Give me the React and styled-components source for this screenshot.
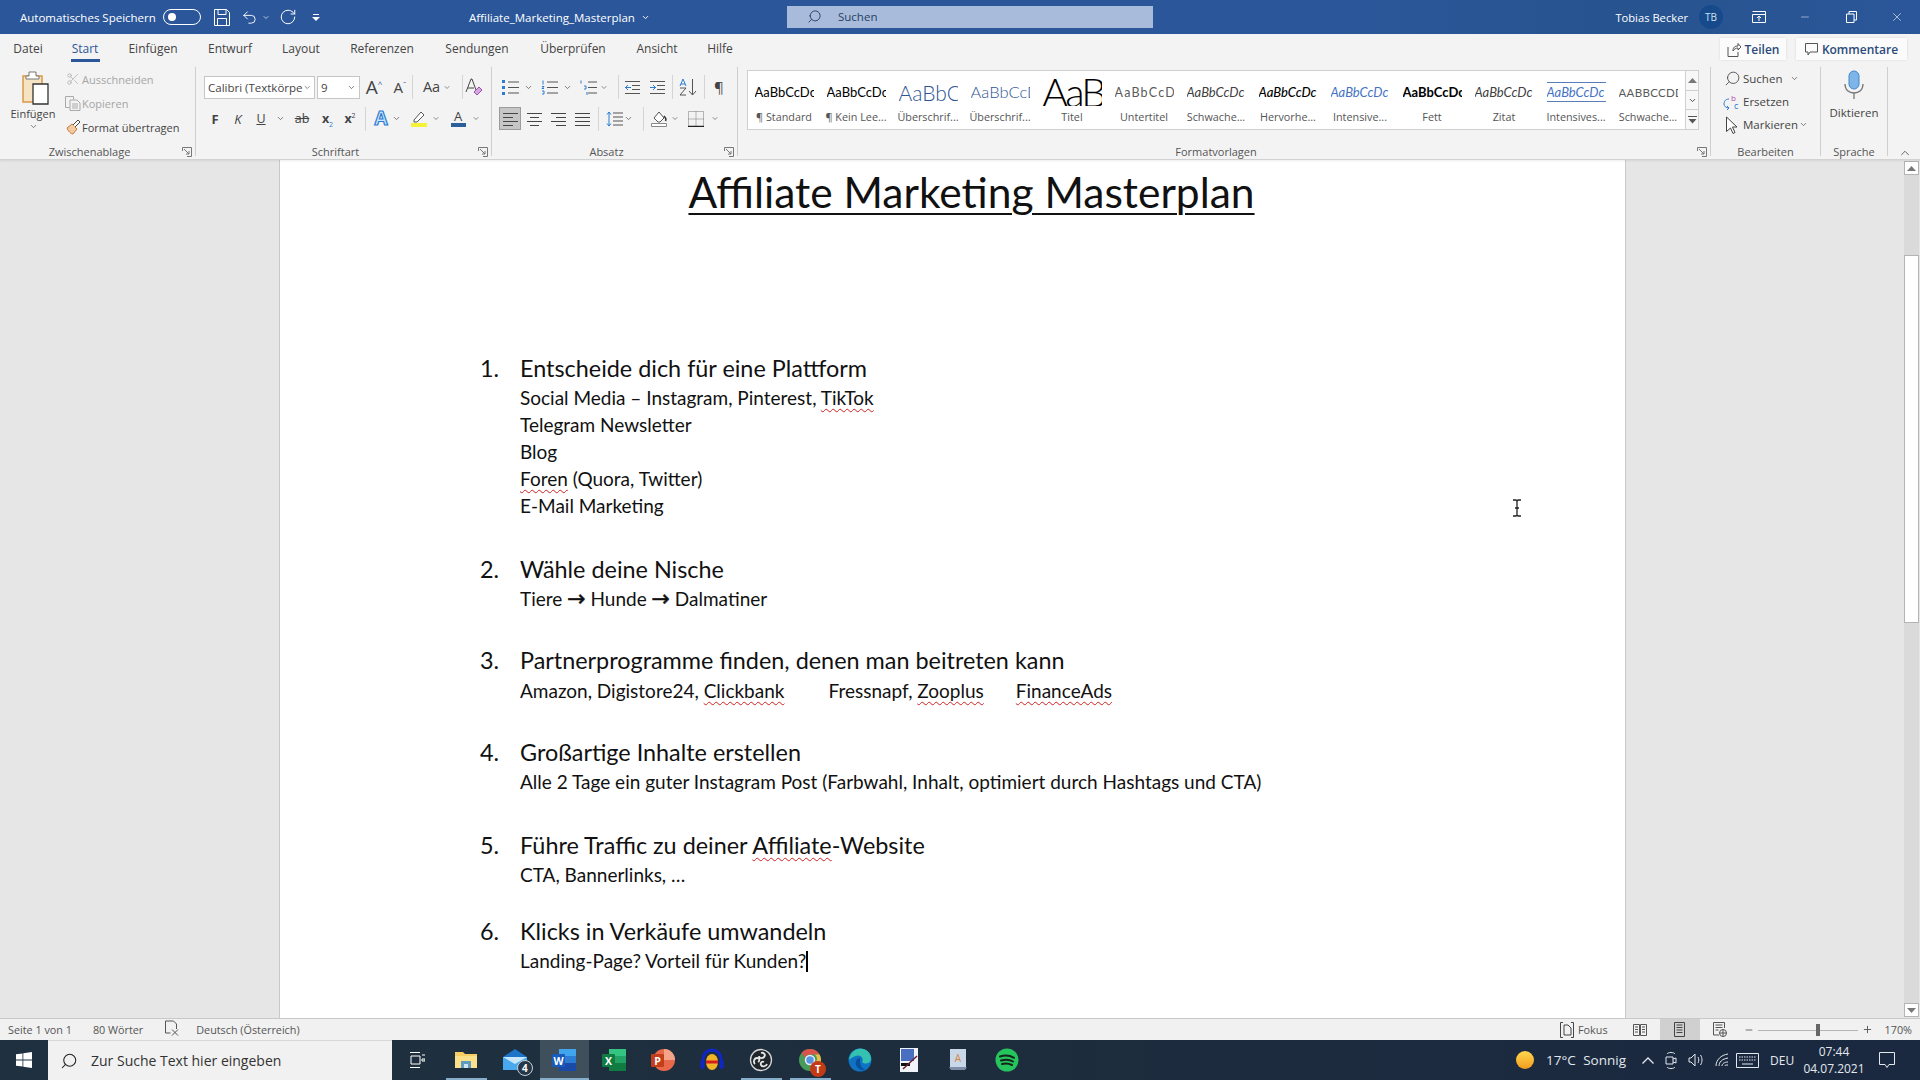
import React from "react";
import styled, { createGlobalStyle } from "styled-components";
import { Undo2, RotateCw, ChevronDown, ChevronUp, Search, Scissors, Minus, Plus, X } from "lucide-react";

const GlobalStyle = createGlobalStyle`
  html, body { margin: 0; padding: 0; width: 1920px; height: 1080px; overflow: hidden; }
  body { font-family: "Open Sans", "Liberation Sans", sans-serif; color: #262626; background: #e6e6e6; }
  * { box-sizing: border-box; }
`;

const tabs = [
  ["Datei", 56], ["Start", 58], ["Einfügen", 78], ["Entwurf", 76], ["Layout", 66],
  ["Referenzen", 96], ["Sendungen", 94], ["Überprüfen", 98], ["Ansicht", 70], ["Hilfe", 56],
];

const galleryItems = [
  { text: "AaBbCcDc", label: "¶ Standard", kind: "normal" },
  { text: "AaBbCcDc", label: "¶ Kein Lee...", kind: "normal" },
  { text: "AaBbCc", label: "Überschrif...", kind: "h1" },
  { text: "AaBbCcD", label: "Überschrif...", kind: "h2" },
  { text: "AaB", label: "Titel", kind: "title" },
  { text: "AaBbCcD", label: "Untertitel", kind: "sub" },
  { text: "AaBbCcDc", label: "Schwache...", kind: "subtle" },
  { text: "AaBbCcDc", label: "Hervorhe...", kind: "emph" },
  { text: "AaBbCcDc", label: "Intensive...", kind: "intense" },
  { text: "AaBbCcDc", label: "Fett", kind: "bold" },
  { text: "AaBbCcDc", label: "Zitat", kind: "subtle" },
  { text: "AaBbCcDc", label: "Intensives...", kind: "quote" },
  { text: "AABBCCDD", label: "Schwache...", kind: "ref" },
];

const previewStyles = {
  normal: "font-size: 13px; color: #000;",
  h1: "font-size: 21px; color: #2f5496; font-weight: 300;",
  h2: "font-size: 16.5px; color: #2f5496; font-weight: 300;",
  title: "font-size: 40px; color: #000; font-weight: 300; line-height: 28px; letter-spacing: -3px;",
  sub: "font-size: 12.5px; color: #5a5a5a; letter-spacing: 1.2px;",
  subtle: "font-size: 13px; color: #404040; font-style: italic;",
  emph: "font-size: 13px; color: #000; font-style: italic; font-weight: 500;",
  intense: "font-size: 13px; color: #4472c4; font-style: italic;",
  bold: "font-size: 13px; color: #000; font-weight: 700;",
  quote: "font-size: 13px; color: #4472c4; font-style: italic; border-top: 1px solid #5b7db5; border-bottom: 1px solid #5b7db5; line-height: 18px;",
  ref: "font-size: 11.5px; color: #5a5a5a; letter-spacing: 0.3px;",
};

const Screen = styled.div`
  width: 1920px;
  height: 1080px;
  display: flex;
  flex-direction: column;
  overflow: hidden;
`;

/* title bar */
const TitleBar = styled.div`
  height: 34px;
  flex: none;
  background: linear-gradient(90deg, #2b579a 0%, #2b579a 70%, #27538f 85%, #2b579a 100%);
  color: #fff;
  display: grid;
  grid-template-columns: 469px 318px 366px 1fr;
  align-items: center;
  font-size: 11.5px;
`;
const QuickAccess = styled.div`
  display: flex;
  align-items: center;
  padding-left: 20px;
`;
const Toggle = styled.div`
  width: 38px;
  height: 16px;
  border: 1.5px solid #fff;
  border-radius: 8px;
  margin-left: 7px;
  padding: 2.5px 4px;
  &::before {
    content: "";
    display: block;
    width: 8px;
    height: 8px;
    border-radius: 50%;
    background: #fff;
  }
`;
const QuickSlot = styled.div`
  width: ${(p) => p.$w}px;
  margin-left: ${(p) => p.$ml || 0}px;
  display: flex;
  justify-content: center;
  align-items: center;
`;
const DocName = styled.div`
  display: flex;
  align-items: center;
  gap: 6px;
`;
const SearchBox = styled.div`
  height: 22px;
  margin-top: -1px;
  background: #a8bbda;
  color: #253f66;
  display: flex;
  align-items: center;
  gap: 16px;
  padding-left: 20px;
`;
const WindowArea = styled.div`
  display: flex;
  justify-content: flex-end;
  align-items: center;
`;
const UserName = styled.span`
  font-size: 11.2px;
`;
const Avatar = styled.div`
  width: 24px;
  height: 24px;
  border-radius: 50%;
  background: #164a8a;
  color: #cfe0f5;
  font-size: 10px;
  display: grid;
  place-items: center;
  margin: 0 13px 0 11px;
`;
const WinButton = styled.div`
  width: 46px;
  height: 34px;
  display: grid;
  place-items: center;
`;

/* tab row */
const TabRow = styled.div`
  height: 32px;
  flex: none;
  background: #f3f3f3;
  display: flex;
  align-items: center;
  font-size: 12px;
  padding-right: 13px;
`;
const Tab = styled.div`
  width: ${(p) => p.$w}px;
  height: 32px;
  line-height: 30px;
  text-align: center;
  position: relative;
  color: ${(p) => (p.$active ? "#2b579a" : "#444")};
  &::after {
    content: "";
    display: ${(p) => (p.$active ? "block" : "none")};
    position: absolute;
    left: 15px;
    right: 14px;
    top: 25px;
    height: 3px;
    background: #2b579a;
  }
`;
const TabActions = styled.div`
  margin-left: auto;
  margin-top: -2px;
  display: flex;
  gap: 10px;
`;
const ActionButton = styled.div`
  width: ${(p) => p.$w}px;
  height: 22px;
  background: #fbfbfb;
  box-shadow: 0 0 2px rgba(0, 0, 0, 0.12);
  color: #2b4a7a;
  font-weight: 600;
  font-size: 12px;
  display: flex;
  align-items: center;
  justify-content: center;
  gap: 4px;
`;

/* ribbon */
const Ribbon = styled.div`
  height: 94px;
  flex: none;
  background: #f3f3f3;
  border-bottom: 1px solid #d2d2d2;
  box-shadow: 0 1px 2px rgba(0, 0, 0, 0.08);
  display: flex;
  align-items: flex-start;
  font-size: 11px;
  color: #444;
  position: relative;
  z-index: 2;
`;
const Group = styled.div`
  width: ${(p) => p.$w}px;
  height: 89px;
  margin-top: 1px;
  border-right: 1px solid #cfcfcf;
  display: flex;
  flex-direction: column;
  position: relative;
`;
const GroupBody = styled.div`
  flex: 1;
  min-height: 0;
  display: flex;
  padding-left: ${(p) => p.$pl || 0}px;
`;
const GroupLabel = styled.div`
  height: 14px;
  line-height: 14px;
  margin-bottom: -3px;
  padding-right: ${(p) => (p.$launcher ? 16 : 0)}px;
  text-align: center;
  font-size: 11px;
  color: #555;
`;
const Launcher = styled.div`
  position: absolute;
  right: 3px;
  bottom: -1px;
  width: 10px;
  height: 10px;
  line-height: 0;
`;
const PasteColumn = styled.div`
  width: 56px;
  margin-left: 5px;
  padding-top: 3px;
  display: flex;
  flex-direction: column;
  align-items: center;
`;
const PasteLabel = styled.div`
  margin-top: 1px;
  line-height: 16px;
`;
const ClipList = styled.div`
  margin-left: 2px;
`;
const ClipRow = styled.div`
  height: 24px;
  display: flex;
  align-items: center;
  color: ${(p) => (p.$off ? "#a6a6a6" : "#444")};
`;
const ClipIcon = styled.div`
  width: 19px;
  display: flex;
  justify-content: center;
`;
const ToolStack = styled.div`
  padding-top: 8px;
  display: flex;
  flex-direction: column;
  gap: 8px;
`;
const ToolRow = styled.div`
  height: ${(p) => p.$h || 24}px;
  display: flex;
  align-items: center;
`;
const FontSelect = styled.div`
  width: ${(p) => p.$w}px;
  margin-left: ${(p) => p.$ml || 0}px;
  height: 23px;
  background: #fff;
  border: 1px solid #c6c6c6;
  display: flex;
  align-items: center;
  justify-content: space-between;
  padding: 0 3px;
  font-size: 11.5px;
  white-space: nowrap;
  overflow: hidden;
`;
const Slot = styled.div`
  width: ${(p) => p.$w}px;
  margin-left: ${(p) => p.$ml || 0}px;
  height: 22px;
  display: flex;
  align-items: center;
  justify-content: center;
  flex: none;
`;
const SelectedSlot = styled(Slot)`
  height: 23px;
  background: #c6c6c6;
  border: 1px solid #9c9c9c;
`;
const ToolSep = styled.div`
  width: 1px;
  height: 24px;
  flex: none;
  background: #d4d4d4;
  margin-left: ${(p) => p.$ml || 0}px;
`;
const BigA = styled.span`
  font-size: ${(p) => p.$size}px;
  line-height: 1;
  color: #444;
  font-family: "Open Sans", sans-serif;
`;
const Caret = styled.span`
  font-size: 8px;
  line-height: 1;
  color: #2b579a;
  align-self: flex-start;
  margin-top: 4px;
`;
const FormatF = styled.span`
  font-size: 13px;
  font-weight: 700;
  color: #444;
`;
const FormatK = styled.span`
  font-size: 13px;
  font-style: italic;
  color: #444;
`;
const FormatU = styled.span`
  font-size: 12.5px;
  text-decoration: underline;
  color: #444;
`;
const FormatS = styled.span`
  font-size: 12.5px;
  text-decoration: line-through;
  color: #444;
`;
const FormatX = styled.span`
  font-size: 12.5px;
  font-weight: 700;
  color: #444;
  sub, sup { font-size: 7px; font-weight: 400; color: #2b7cd3; line-height: 0; }
  sup { color: #444; }
`;
const EffectA = styled.span`
  font-size: 19px;
  font-weight: 700;
  line-height: 1;
  color: #cfe6fb;
  -webkit-text-stroke: 1.2px #2b7cd3;
`;
const ColorA = styled.div`
  display: flex;
  flex-direction: column;
  align-items: center;
  font-size: 13px;
  line-height: 12px;
  color: #444;
  &::after {
    content: "";
    width: 15px;
    height: 4px;
    margin-top: 1px;
    background: #2a6099;
  }
`;
const Gallery = styled.div`
  margin-left: 9px;
  margin-top: 3px;
  width: 952px;
  height: 60px;
  background: #fff;
  border: 1px solid #d0d0d0;
  display: flex;
`;
const GalleryItem = styled.div`
  width: 72px;
  flex: none;
  display: flex;
  flex-direction: column;
  align-items: center;
`;
const Preview = styled.div`
  width: 60px;
  height: 38px;
  margin-top: 2px;
  overflow: hidden;
  display: flex;
  align-items: center;
  justify-content: center;
  font-family: "Lato", sans-serif;
`;
const PreviewText = styled.span`
  white-space: nowrap;
  display: block;
  width: ${(p) => (p.$kind === "title" ? "auto" : "59px")};
  text-align: ${(p) => (p.$kind === "title" ? "center" : "left")};
  overflow: hidden;
  ${(p) => previewStyles[p.$kind]}
`;
const ItemLabel = styled.div`
  font-size: 10.8px;
  line-height: 13px;
  margin-top: -1px;
  white-space: nowrap;
  color: #555;
`;
const GalleryScroll = styled.div`
  margin-left: 1px;
  width: 14px;
  display: flex;
  flex-direction: column;
  border-left: 1px solid #d0d0d0;
`;
const ScrollCell = styled.div`
  flex: 1;
  border-bottom: 1px solid #d0d0d0;
  background: #f7f7f7;
  display: grid;
  place-items: center;
  &:last-child { border-bottom: 0; }
`;
const EditList = styled.div`
  padding-left: 12px;
  width: 100%;
`;
const EditRow = styled.div`
  height: 23px;
  display: flex;
  align-items: center;
  font-size: 11.5px;
  gap: 2px;
`;
const EditIcon = styled.div`
  width: 18px;
  display: flex;
  justify-content: center;
`;
const EditChevron = styled.div`
  margin-left: ${(p) => p.$ml}px;
  line-height: 0;
`;
const VoiceColumn = styled.div`
  width: 100%;
  display: flex;
  flex-direction: column;
  align-items: center;
  padding-top: 3px;
  font-size: 11.5px;
`;
const VoiceLabel = styled.div`
  margin-top: 5px;
`;
const CollapseRibbon = styled.div`
  margin-left: 10px;
  margin-top: 80px;
  line-height: 0;
  color: #555;
`;

/* document */
const Workspace = styled.div`
  flex: 1;
  min-height: 0;
  display: flex;
  background: #e6e6e6;
  padding-left: 279px;
  padding-right: 1px;
  justify-content: space-between;
`;
const Page = styled.div`
  width: 1347px;
  height: 100%;
  background: #fff;
  border-left: 1px solid #c9c9c9;
  border-right: 1px solid #c9c9c9;
  padding: 2px 162px 0 200px;
  font-family: "Lato", "Liberation Sans", sans-serif;
  color: #111;
  position: relative;
`;
const DocTitle = styled.div`
  font-size: 42.5px;
  line-height: 60px;
  text-align: center;
  text-decoration: underline;
  text-decoration-thickness: 2px;
  text-underline-offset: 5px;
`;
const Item = styled.div`
  margin-top: ${(p) => p.$mt}px;
`;
const Heading = styled.div`
  display: flex;
  font-size: 23.4px;
  line-height: 30px;
  margin-bottom: 1px;
`;
const Num = styled.span`
  width: 40px;
  flex: none;
`;
const SubLine = styled.div`
  padding-left: 40px;
  margin-top: ${(p) => p.$mt || 0}px;
  font-size: 19px;
  line-height: 27px;
  white-space: pre;
`;
const Misspelled = styled.span`
  text-decoration: underline wavy #d02020;
  text-decoration-thickness: 1px;
  text-underline-offset: 3px;
`;
const TabGap = styled.span`
  display: inline-block;
  width: ${(p) => p.$w}px;
`;
const Arrow = styled.span`
  font-family: "DejaVu Sans", sans-serif;
  font-size: 22px;
  line-height: 1;
  -webkit-text-stroke: 0.5px #111;
`;
const TextCaret = styled.span`
  display: inline-block;
  width: 1.5px;
  height: 21px;
  background: #000;
  vertical-align: -4px;
`;
const MouseCursor = styled.div`
  position: absolute;
  left: 1230px;
  top: 339px;
  line-height: 0;
`;
const ScrollBar = styled.div`
  width: 15px;
  display: flex;
  flex-direction: column;
  margin-top: 1px;
  margin-bottom: 1px;
  background: #dadada;
`;
const ScrollArrow = styled.div`
  height: 14px;
  flex: none;
  background: #fff;
  border: 1px solid #b4b4b4;
  display: grid;
  place-items: center;
`;
const ScrollThumb = styled.div`
  height: 368px;
  flex: none;
  margin-top: 80px;
  margin-bottom: auto;
  background: #fff;
  border: 1px solid #b4b4b4;
`;

/* status bar */
const StatusBar = styled.div`
  height: 22px;
  flex: none;
  background: #f1f1f1;
  border-top: 1px solid #c8c8c8;
  display: flex;
  align-items: center;
  font-size: 10.8px;
  color: #555;
  padding-left: 8px;
`;
const StatusText = styled.div`
  margin-left: ${(p) => p.$ml || 0}px;
  white-space: nowrap;
`;
const StatusRight = styled.div`
  margin-left: auto;
  display: flex;
  align-items: center;
  height: 21px;
  padding-right: 8px;
`;
const ViewButton = styled.div`
  width: 40px;
  height: 21px;
  display: grid;
  place-items: center;
  background: ${(p) => (p.$on ? "#d0d0d0" : "transparent")};
  margin-left: ${(p) => p.$ml || 0}px;
`;
const ZoomSlider = styled.div`
  width: 100px;
  height: 14px;
  margin: 0 4px;
  position: relative;
  &::before {
    content: "";
    position: absolute;
    left: 0;
    right: 0;
    top: 7px;
    height: 1px;
    background: #b5b5b5;
  }
`;
const ZoomThumb = styled.div`
  position: absolute;
  left: 58px;
  top: 1px;
  width: 4px;
  height: 12px;
  background: #666;
`;
const ZoomMinus = styled.div`
  margin-left: 4px;
  line-height: 0;
`;

/* taskbar */
const Taskbar = styled.div`
  height: 40px;
  flex: none;
  background: linear-gradient(90deg, #1f3140, #1d2d3d 50%, #1a2840);
  display: flex;
  align-items: stretch;
  color: #e3e8ee;
`;
const StartButton = styled.div`
  width: 48px;
  display: grid;
  place-items: center;
`;
const TaskSearch = styled.div`
  width: 344px;
  background: #f1f1f1;
  color: #333;
  font-size: 14px;
  display: flex;
  align-items: center;
  gap: 13px;
  padding-left: 12px;
  border-top: 1px solid #d8d8d8;
`;
const TaskSlot = styled.div`
  width: ${(p) => p.$w || 49.2}px;
  display: grid;
  place-items: center;
  position: relative;
  background: ${(p) => (p.$active ? "#3f4f5c" : "transparent")};
  &::after {
    content: "";
    display: ${(p) => (p.$running ? "block" : "none")};
    position: absolute;
    bottom: 0;
    left: ${(p) => (p.$active ? 0 : 4)}px;
    right: ${(p) => (p.$active ? 0 : 4)}px;
    height: 2px;
    background: #86aecb;
  }
`;
const Badge = styled.div`
  position: absolute;
  right: 7px;
  bottom: 4px;
  width: 16px;
  height: 16px;
  border-radius: 50%;
  background: #263848;
  border: 1px solid #c9d0d6;
  color: #fff;
  font-size: 10px;
  font-weight: 700;
  display: grid;
  place-items: center;
`;
const ChromeBadge = styled(Badge)`
  right: 9px;
  bottom: 3px;
  background: #c23b16;
  border: 0;
`;
const Tray = styled.div`
  margin-left: auto;
  display: flex;
  align-items: center;
  font-size: 12.5px;
`;
const Sun = styled.div`
  width: 18px;
  height: 18px;
  border-radius: 50%;
  background: linear-gradient(180deg, #ffd84d, #f39c1f);
`;
const Weather = styled.div`
  margin-left: 12px;
  font-size: 13.5px;
  white-space: nowrap;
  word-spacing: 4px;
`;
const TrayIcon = styled.div`
  width: ${(p) => p.$w}px;
  margin-left: ${(p) => p.$ml || 0}px;
  display: grid;
  place-items: center;
  font-size: 12px;
`;
const Clock = styled.div`
  width: 62px;
  margin-left: 9px;
  font-size: 12px;
  line-height: 17px;
  text-align: center;
`;

/* drawings */
const Svg = ({ w, h, children, fill = "none", stroke = "#444", sw = 1 }) => (
  <svg width={w} height={h} viewBox={`0 0 ${w} ${h}`} fill={fill} stroke={stroke} strokeWidth={sw}>
    {children}
  </svg>
);
const Chev = ({ c = "#555" }) => <ChevronDown size={9} color={c} strokeWidth={2} />;
const LauncherIcon = () => (
  <Launcher>
    <Svg w={10} h={10} stroke="#777">
      <path d="M.5 4V.5H9.5V9.5H5M2 2l5 5M7 4v3H4" />
    </Svg>
  </Launcher>
);
const SaveIcon = () => (
  <Svg w={16} h={17} stroke="#fff">
    <path d="M.5.5h12l3 3v13H.5zM4 .5v5h8v-5M3.500 16.500v-7h9v7" />
  </Svg>
);
const CustomizeIcon = () => (
  <Svg w={8} h={7} fill="#fff" stroke="none">
    <path d="M1 0h6v1H1zM0 3h8L4 7z" />
  </Svg>
);
const PasteIcon = () => (
  <Svg w={32} h={35}>
    <path d="M6 6h19v26H6z" fill="#f6e3c4" stroke="#d99a45" strokeWidth="1.5" />
    <path d="M12 6V2h7v4h3v3H9V6z" fill="#fff" stroke="#777" />
    <path d="M16 14h15v20H16z" fill="#fff" stroke="#333" strokeWidth="1.3" />
  </Svg>
);
const CopyIcon = () => (
  <Svg w={16} h={16} stroke="#aaa">
    <path d="M.5 1.500h8v3M.5 1.500v11h4M5 5h7l3 3v7.500H5zM7 9h6M7 11h6M7 13h6" />
  </Svg>
);
const BrushIcon = () => (
  <Svg w={16} h={16}>
    <path d="M2 9l5-4 5 5-4 5c-2 0-5-3-6-6z" fill="#f3c9a2" stroke="#c77a3a" />
    <path d="M8 6l5-5 2 2-5 5" fill="#fff" stroke="#444" />
  </Svg>
);
const ClearIcon = () => (
  <Svg w={18} h={18} stroke="#444">
    <path d="M1 14L6 1h1l4 11M3 10h6" />
    <path d="M9 14l5-5 3 3-5 5z" fill="#d6a6e0" stroke="#9b4fb0" />
  </Svg>
);
const HighlightIcon = () => (
  <Svg w={16} h={17}>
    <path d="M3 10l7-8 3 3-7 7H3z" fill="#fff" stroke="#555" />
    <path d="M0 13h16v4H0z" fill="#f5f23a" stroke="none" />
  </Svg>
);
const ListIcon = ({ kind }) => {
  const x = kind === "multi" ? 8 : 6;
  return (
    <Svg w={17} h={15} stroke="#555">
      <path d={`M${x} 2H17M${x} 7.500H17M${x} 13H17`} />
      {kind === "bullet" && (
        <g fill="#2b7cd3" stroke="none">
          <rect x="0" y="0" width="3" height="3" />
          <rect x="0" y="6" width="3" height="3" />
          <rect x="0" y="12" width="3" height="3" />
        </g>
      )}
      {kind === "number" && (
        <g stroke="#2b7cd3">
          <path d="M2 .5v4M1 6.500h2l-2 2h2M1 11h2v3H1" />
        </g>
      )}
      {kind === "multi" && (
        <g stroke="#2b7cd3">
          <path d="M1 .5v3M4 6h2v3H4M7 12v3" />
        </g>
      )}
    </Svg>
  );
};
const IndentIcon = ({ dir }) => (
  <Svg w={15} h={13} stroke="#555">
    <path d="M0 .5H15M7 4.500H15M7 8.500H15M0 12.500H15" />
    <path d={dir === "out" ? "M6 6.500H0M3 4L.5 6.500 3 9" : "M0 6.500H6M3 4l2.500 2.500L3 9"} stroke="#2b7cd3" />
  </Svg>
);
const SortIcon = () => (
  <Svg w={18} h={18} stroke="#555">
    <path d="M13.500 1v16M10 13l3.500 4 3.500-4" />
    <path d="M1 8l3-7 3 7M2 6h4" stroke="#2b7cd3" />
    <path d="M1 10h6l-6 7h6" />
  </Svg>
);
const AlignIcon = ({ a }) => {
  const short = a === "justify" ? [0, 15] : a === "left" ? [0, 10] : a === "center" ? [3, 12] : [5, 15];
  const rows = [[0, 15], short, [0, 15], short];
  return (
    <Svg w={15} h={14} stroke="#444">
      <path d={rows.map(([s, e], i) => `M${s} ${i * 4 + 1.5}H${e}`).join("")} />
    </Svg>
  );
};
const SpacingIcon = () => (
  <Svg w={17} h={16} stroke="#555">
    <path d="M7 2H17M7 6H17M7 10H17M7 14H17" />
    <path d="M3 1v14M1 3.500L3 1l2 2.500M1 12.500L3 15l2-2.500" stroke="#2b7cd3" />
  </Svg>
);
const FillIcon = () => (
  <Svg w={16} h={17} stroke="#555">
    <path d="M3 8l5-6 5 6-4 4H7z" fill="#fff" />
    <path d="M13 6c2 2 2 4 1.500 5" stroke="#333" strokeWidth="1.5" />
    <path d="M.5 13.500h15v3H.5z" fill="#fff" stroke="#888" />
  </Svg>
);
const BorderIcon = () => (
  <Svg w={16} h={16} stroke="#777">
    <path d="M.5.5h15v15H.5zM8 .5v15M.5 8h15" strokeDasharray="1 1" />
    <path d="M0 15.500h16" stroke="#222" strokeWidth="1.500" />
  </Svg>
);
const ReplaceIcon = () => (
  <Svg w={18} h={18} stroke="#2b7cd3">
    <path d="M6 6C2 6 1 9 1 11s2 4 5 4M6 15l-2-2M6 15l-2 2" />
    <text x="8" y="8" fontSize="8" fill="#b04bb0" stroke="none" fontFamily="Open Sans">b</text>
    <text x="11" y="16" fontSize="9" fill="#2b7cd3" stroke="none" fontFamily="Open Sans">c</text>
  </Svg>
);
const PointerIcon = () => (
  <Svg w={14} h={18} stroke="#444">
    <path d="M1.500 1L12 11H7.500L10 16.500 8 17.500 5.500 12 1.500 15.500z" fill="#fff" />
  </Svg>
);
const MicIcon = () => (
  <Svg w={22} h={30}>
    <rect x="6" y="1" width="10" height="18" rx="5" fill="#7db5ea" stroke="#3f87cc" />
    <path d="M2 14c0 6 4 9 9 9s9-3 9-9" stroke="#777" strokeWidth="1.300" />
    <path d="M11 23v6" stroke="#777" strokeWidth="1.300" />
  </Svg>
);
const ShareIcon = () => (
  <Svg w={14} h={15} stroke="#555">
    <path d="M1 5v9.500h10V10M6 9c0-4 2-5 5-5V1.500L14 5l-3 3V6C9 6 7 7 6 9z" />
  </Svg>
);
const CommentIcon = () => (
  <Svg w={13} h={13} stroke="#555">
    <path d="M.5.5h12v8.500H5L3 12V9H.5z" />
  </Svg>
);
const RibbonDisplayIcon = () => (
  <Svg w={14} h={12} stroke="#fff">
    <path d="M.5 3.500h13v8H.5zM.5.5h13v3M7 10V5M5 7l2-2 2 2" />
  </Svg>
);
const RestoreIcon = () => (
  <Svg w={11} h={12} stroke="#fff">
    <path d="M.5 3h7.500v8.500H.5zM3 3V.5h7.500V9H8" />
  </Svg>
);
const TriUp = () => <Svg w={9} h={5} fill="#777" stroke="none"><path d="M4.500 0L9 5H0z" /></Svg>;
const TriDown = () => <Svg w={9} h={5} fill="#777" stroke="none"><path d="M0 0h9L4.500 5z" /></Svg>;
const GalleryMore = () => (
  <Svg w={9} h={8} fill="#555" stroke="#555">
    <path d="M0 .5h9" fill="none" />
    <path d="M.5 3h8L4.500 7.500z" stroke="none" />
  </Svg>
);
const ProofIcon = () => (
  <Svg w={14} h={16} stroke="#555">
    <path d="M.5 1h8l3 3v5M.5 1v12h5M7 9.500l6 6M13 9.500l-6 6" />
  </Svg>
);
const FocusIcon = () => (
  <Svg w={14} h={16} stroke="#444">
    <path d="M3 .5H.5v15H3M11 .5h2.500v15H11M4 3h4l3 3v7H4z" />
  </Svg>
);
const ReadIcon = () => (
  <Svg w={14} h={14} stroke="#555">
    <path d="M.5 1.500h6v11h-6zM7.500 1.500h6v11h-6zM2 4h3M2 6.500h3M2 9h3M9 4h3M9 6.500h3M9 9h3" />
  </Svg>
);
const PrintIcon = () => (
  <Svg w={11} h={15} stroke="#444">
    <path d="M.5.5h10v14H.5zM2.500 3h6M2.500 5.500h6M2.500 8h6M2.500 10.500h6" />
  </Svg>
);
const WebIcon = () => (
  <Svg w={14} h={15} stroke="#555">
    <path d="M6 13H.5V.5h11V6M2.500 3h7M2.500 5.500h7M2.500 8h3" />
    <circle cx="10" cy="11" r="3.500" fill="#f1f1f1" />
    <path d="M6.500 11h7M10 7.500v7" />
  </Svg>
);
const IBeam = () => (
  <Svg w={14} h={18} stroke="#222" sw={1.300}>
    <path d="M3 1h3l1 1 1-1h3M7 2v14M3 17h3l1-1 1 1h3M5 9h4" />
  </Svg>
);
const WinLogo = () => (
  <Svg w={16} h={16} fill="#fff" stroke="none">
    <path d="M0 2.300L6.500 1.400v6.200H0zM7.300 1.300L16 0v7.600H7.300zM0 8.400h6.500v6.200L0 13.700zM7.300 8.400H16V16l-8.700-1.300z" />
  </Svg>
);
const TaskViewIcon = () => (
  <Svg w={16} h={16} stroke="#fff">
    <path d="M1 .5h10M1 15.500h10M2 4h9v8H2zM13 3h3M13 7h3v2h-3z" />
  </Svg>
);
const FolderIcon = () => (
  <Svg w={24} h={22} stroke="none">
    <path d="M1 3h8l2 2h12v14H1z" fill="#f5cf63" />
    <path d="M1 7h22v12H1z" fill="#fbe08a" />
    <path d="M7 12h10v7H7z" fill="#5d9cc0" />
    <path d="M10 15h4v4h-4z" fill="#cfe3ef" />
  </Svg>
);
const MailIcon = () => (
  <Svg w={26} h={24} stroke="none">
    <path d="M1 9L13 1l12 8v13H1z" fill="#1c74c9" />
    <path d="M1 9h24v13H1z" fill="#49a9ee" />
    <path d="M1 9l12 7 12-7" fill="#c9e6fb" />
  </Svg>
);
const OfficeIcon = ({ dark, mid, light, tile, letter }) => (
  <Svg w={26} h={24} stroke="none">
    <path d="M8 1h17v22H8z" fill={mid} />
    <path d="M8 1h17v7H8z" fill={light} />
    <path d="M8 15h17v8H8z" fill={dark} />
    <rect x="1" y="6" width="13" height="13" rx="1" fill={tile} />
    <text x="7.500" y="16.500" textAnchor="middle" fontSize="10.500" fontWeight="700" fill="#fff" fontFamily="Open Sans">{letter}</text>
  </Svg>
);
const PowerPointIcon = () => (
  <Svg w={26} h={24} stroke="none">
    <circle cx="14" cy="12" r="11" fill="#e8684a" />
    <path d="M14 1a11 11 0 0 1 11 11H14z" fill="#f3a38a" />
    <rect x="1" y="6" width="13" height="13" rx="1" fill="#c43e1c" />
    <text x="7.500" y="16.500" textAnchor="middle" fontSize="10.500" fontWeight="700" fill="#fff" fontFamily="Open Sans">P</text>
  </Svg>
);
const AudacityIcon = () => (
  <Svg w={26} h={24}>
    <path d="M4 15V11a9 9 0 0 1 18 0v4" stroke="#1026c9" strokeWidth="3" />
    <rect x="1.500" y="12" width="4" height="9" rx="2" fill="#1026c9" stroke="none" />
    <rect x="20.500" y="12" width="4" height="9" rx="2" fill="#1026c9" stroke="none" />
    <ellipse cx="13" cy="14" rx="6" ry="8" fill="#f0b429" stroke="none" />
    <path d="M7 14h12" stroke="#d41f1f" strokeWidth="3" />
  </Svg>
);
const ObsIcon = () => (
  <Svg w={24} h={24} stroke="#d6d6d6" sw={1.300}>
    <circle cx="12" cy="12" r="10.500" fill="#20262c" />
    <path d="M12 5c3-1 5 2 3 4s-5 1-5-1M6 16c-2-2-1-6 2-6s3 3 1 4M18 16c-1 3-5 3-6 1s1-4 3-3" stroke="#e8e8e8" strokeWidth="1.800" />
  </Svg>
);
const ChromeIcon = () => (
  <Svg w={24} h={24} stroke="none">
    <circle cx="12" cy="12" r="11" fill="#4a9a5a" />
    <path d="M12 1a11 11 0 0 1 9.500 5.500H12A5.500 5.500 0 0 0 7 9.500L3.500 5A11 11 0 0 1 12 1z" fill="#d9534a" />
    <path d="M21.500 6.500A11 11 0 0 1 12 23l5-8a5.500 5.500 0 0 0 0-8.500z" fill="#e9bf4a" />
    <circle cx="12" cy="12" r="4.500" fill="#5b94e0" stroke="#e9eef5" strokeWidth="1.500" />
  </Svg>
);
const EdgeIcon = () => (
  <Svg w={24} h={24} stroke="none">
    <circle cx="12" cy="12" r="11.500" fill="#0f73c4" />
    <path d="M1 12C2 4 8 .5 12 .5c6 0 11 4 11 10 0 4-3 5-5.500 5-2 0-4-1-3-2.500 1-2-1-6-5-5.500C6 8 3 10 1 12z" fill="#35c1b0" />
    <path d="M12 10c-3 0-5 3-4 7 1 3 5 6 9 5-3-2-5-4-5-8z" fill="#0a4f9c" />
  </Svg>
);
const SnipIcon = () => (
  <Svg w={18} h={24} stroke="none">
    <path d="M0 0h18v24H0z" fill="#f0f3f8" />
    <path d="M1 1h13v12H1z" fill="#4a6fc0" />
    <path d="M1 15h9v3H1z" fill="#111" />
    <path d="M3 21L17 8" stroke="#6a2230" strokeWidth="1.500" />
  </Svg>
);
const NotepadIcon = () => (
  <Svg w={18} h={24} stroke="none">
    <path d="M1 1h16v20H1z" fill="#c9d8e8" />
    <path d="M0 19h18l-2 3H2z" fill="#7d8ea6" />
    <text x="9" y="14" textAnchor="middle" fontSize="10" fill="#d8853a" fontFamily="Open Sans">A</text>
  </Svg>
);
const SpotifyIcon = () => (
  <Svg w={24} h={24} stroke="#15231a" sw={2}>
    <circle cx="12" cy="12" r="11.500" fill="#26c45c" stroke="none" />
    <path d="M5 8.500c5-1.500 10-1 14 1.300M6 12.500c4-1 9-.7 12 1M7 16c3.500-.8 7-.5 10 1" strokeLinecap="round" />
  </Svg>
);
const ChevUpTray = () => (
  <Svg w={12} h={7} stroke="#e3e8ee" sw={1.300}><path d="M.5 6.500L6 1l5.500 5.500" /></Svg>
);
const MeetIcon = () => (
  <Svg w={12} h={19} stroke="#e3e8ee">
    <path d="M2 3c1-2 7-2 8 0M2 16c1 2 7 2 8 0M1 6h7v7H1zM8 8l3-1v5l-3-1" />
  </Svg>
);
const SpeakerIcon = () => (
  <Svg w={16} h={14} stroke="#e3e8ee">
    <path d="M1 5h2l4-4v12L3 9H1zM10 4c1 2 1 4 0 6M12.500 2c2 3 2 7 0 10" />
  </Svg>
);
const WifiIcon = () => (
  <Svg w={14} h={14} stroke="#e3e8ee">
    <path d="M1 13C1 7 6 2 13 1M4 13c0-4 3-7 9-8M7 13c0-2 2-4 6-4M10 13c0-1 1-1 3-1" />
  </Svg>
);
const KeyboardIcon = () => (
  <Svg w={23} h={15} stroke="#e3e8ee">
    <path d="M3 4h17M3 7h17" strokeDasharray="1.500 1" />
    <path d="M.5.5h22v14H.5zM6 11h11" />
  </Svg>
);
const NotifyIcon = () => (
  <Svg w={16} h={16} stroke="#e3e8ee">
    <path d="M.5.5h15v12H10l-2 3-2-3H.5z" />
  </Svg>
);

const Word = ({ children }) => <Misspelled>{children}</Misspelled>;

const App = () => {
  return (
    <Screen>
      <GlobalStyle />
      <TitleBar>
        <QuickAccess>
          <span>Automatisches Speichern</span>
          <Toggle />
          <QuickSlot $w={16} $ml={13}><SaveIcon /></QuickSlot>
          <QuickSlot $w={17} $ml={11}><Undo2 size={19} color="#fff" strokeWidth={1.3} /></QuickSlot>
          <QuickSlot $w={8} $ml={4}><ChevronDown size={9} color="#fff" /></QuickSlot>
          <QuickSlot $w={18} $ml={9}><RotateCw size={18} color="#fff" strokeWidth={1.3} /></QuickSlot>
          <QuickSlot $w={10} $ml={14}><CustomizeIcon /></QuickSlot>
        </QuickAccess>
        <DocName>
          <span>Affiliate_Marketing_Masterplan</span>
          <ChevronDown size={9} color="#fff" strokeWidth={2.5} />
        </DocName>
        <SearchBox>
          <Search size={15} color="#253f66" strokeWidth={1.5} style={{ transform: "scaleX(-1)" }} />
          <span>Suchen</span>
        </SearchBox>
        <WindowArea>
          <UserName>Tobias Becker</UserName>
          <Avatar>TB</Avatar>
          <WinButton><RibbonDisplayIcon /></WinButton>
          <WinButton><Minus size={12} color="#fff" strokeWidth={1} /></WinButton>
          <WinButton><RestoreIcon /></WinButton>
          <WinButton><X size={14} color="#fff" strokeWidth={1} /></WinButton>
        </WindowArea>
      </TitleBar>

      <TabRow>
        {tabs.map(([name, w]) => (
          <Tab key={name} $w={w} $active={name === "Start"}>{name}</Tab>
        ))}
        <TabActions>
          <ActionButton $w={66}><ShareIcon />Teilen</ActionButton>
          <ActionButton $w={111}><CommentIcon />Kommentare</ActionButton>
        </TabActions>
      </TabRow>

      <Ribbon>
        <Group $w={196}>
          <GroupBody>
            <PasteColumn>
              <PasteIcon />
              <PasteLabel>Einfügen</PasteLabel>
              <Chev />
            </PasteColumn>
            <ClipList>
              <ClipRow $off><ClipIcon><Scissors size={14} color="#aaa" strokeWidth={1.2} /></ClipIcon>Ausschneiden</ClipRow>
              <ClipRow $off><ClipIcon><CopyIcon /></ClipIcon>Kopieren</ClipRow>
              <ClipRow><ClipIcon><BrushIcon /></ClipIcon>Format übertragen</ClipRow>
            </ClipList>
          </GroupBody>
          <GroupLabel $launcher>Zwischenablage</GroupLabel>
          <LauncherIcon />
        </Group>

        <Group $w={296}>
          <GroupBody $pl={8}>
            <ToolStack>
              <ToolRow>
                <FontSelect $w={111}>Calibri (Textkörpe<Chev /></FontSelect>
                <FontSelect $w={43} $ml={2}>9<Chev /></FontSelect>
                <Slot $w={28}><BigA $size={19}>A</BigA><Caret>^</Caret></Slot>
                <Slot $w={24}><BigA $size={15}>A</BigA><Caret>ˇ</Caret></Slot>
                <ToolSep />
                <Slot $w={25} $ml={6}><BigA $size={14.5}>Aa</BigA></Slot>
                <Slot $w={8} $ml={-1}><Chev /></Slot>
                <ToolSep $ml={11} />
                <Slot $w={18} $ml={2}><ClearIcon /></Slot>
              </ToolRow>
              <ToolRow $h={23}>
                <Slot $w={22}><FormatF>F</FormatF></Slot>
                <Slot $w={24}><FormatK>K</FormatK></Slot>
                <Slot $w={22}><FormatU>U</FormatU></Slot>
                <Slot $w={16}><Chev /></Slot>
                <Slot $w={28}><FormatS>ab</FormatS></Slot>
                <Slot $w={23}><FormatX>x<sub>2</sub></FormatX></Slot>
                <Slot $w={22}><FormatX>x<sup>2</sup></FormatX></Slot>
                <ToolSep $ml={4} />
                <Slot $w={22} $ml={4}><EffectA>A</EffectA></Slot>
                <Slot $w={9}><Chev /></Slot>
                <Slot $w={20} $ml={8}><HighlightIcon /></Slot>
                <Slot $w={8} $ml={3}><Chev /></Slot>
                <Slot $w={20} $ml={8}><ColorA>A</ColorA></Slot>
                <Slot $w={8} $ml={4}><Chev /></Slot>
              </ToolRow>
            </ToolStack>
          </GroupBody>
          <GroupLabel $launcher>Schriftart</GroupLabel>
          <LauncherIcon />
        </Group>

        <Group $w={246}>
          <GroupBody $pl={8}>
            <ToolStack>
              <ToolRow>
                <Slot $w={20}><ListIcon kind="bullet" /></Slot>
                <Slot $w={16}><Chev /></Slot>
                <Slot $w={26}><ListIcon kind="number" /></Slot>
                <Slot $w={10}><Chev /></Slot>
                <Slot $w={24} $ml={4}><ListIcon kind="multi" /></Slot>
                <Slot $w={8}><Chev /></Slot>
                <ToolSep $ml={10} />
                <Slot $w={19} $ml={4}><IndentIcon dir="out" /></Slot>
                <Slot $w={20} $ml={5}><IndentIcon dir="in" /></Slot>
                <ToolSep $ml={5} />
                <Slot $w={20} $ml={5}><SortIcon /></Slot>
                <ToolSep $ml={6} />
                <Slot $w={28}><BigA $size={15}>¶</BigA></Slot>
              </ToolRow>
              <ToolRow $h={23}>
                <SelectedSlot $w={22} $ml={-1}><AlignIcon a="left" /></SelectedSlot>
                <Slot $w={22} $ml={2}><AlignIcon a="center" /></Slot>
                <Slot $w={22} $ml={2}><AlignIcon a="right" /></Slot>
                <Slot $w={22} $ml={2}><AlignIcon a="justify" /></Slot>
                <ToolSep $ml={5} />
                <Slot $w={18} $ml={6}><SpacingIcon /></Slot>
                <Slot $w={10}><Chev /></Slot>
                <ToolSep $ml={10} />
                <Slot $w={17} $ml={6}><FillIcon /></Slot>
                <Slot $w={8} $ml={4}><Chev /></Slot>
                <Slot $w={16} $ml={9}><BorderIcon /></Slot>
                <Slot $w={8} $ml={7}><Chev /></Slot>
              </ToolRow>
            </ToolStack>
          </GroupBody>
          <GroupLabel $launcher>Absatz</GroupLabel>
          <LauncherIcon />
        </Group>

        <Group $w={973}>
          <GroupBody>
            <Gallery>
              {galleryItems.map((item, i) => (
                <GalleryItem key={i}>
                  <Preview><PreviewText $kind={item.kind}>{item.text}</PreviewText></Preview>
                  <ItemLabel>{item.label}</ItemLabel>
                </GalleryItem>
              ))}
              <GalleryScroll>
                <ScrollCell><TriUp /></ScrollCell>
                <ScrollCell><ChevronDown size={9} color="#444" strokeWidth={2.5} /></ScrollCell>
                <ScrollCell><GalleryMore /></ScrollCell>
              </GalleryScroll>
            </Gallery>
          </GroupBody>
          <GroupLabel $launcher>Formatvorlagen</GroupLabel>
          <LauncherIcon />
        </Group>

        <Group $w={110}>
          <GroupBody>
            <EditList>
              <EditRow><EditIcon><Search size={17} color="#444" strokeWidth={1.2} style={{ transform: "scaleX(-1)" }} /></EditIcon>Suchen<EditChevron $ml={6}><Chev /></EditChevron></EditRow>
              <EditRow><EditIcon><ReplaceIcon /></EditIcon>Ersetzen</EditRow>
              <EditRow><EditIcon><PointerIcon /></EditIcon>Markieren<EditChevron $ml={-1}><Chev /></EditChevron></EditRow>
            </EditList>
          </GroupBody>
          <GroupLabel>Bearbeiten</GroupLabel>
        </Group>

        <Group $w={67}>
          <GroupBody>
            <VoiceColumn>
              <MicIcon />
              <VoiceLabel>Diktieren</VoiceLabel>
            </VoiceColumn>
          </GroupBody>
          <GroupLabel>Sprache</GroupLabel>
        </Group>

        <CollapseRibbon><ChevronUp size={14} strokeWidth={1.5} /></CollapseRibbon>
      </Ribbon>

      <Workspace>
        <Page>
          <DocTitle>Affiliate Marketing Masterplan</DocTitle>
          <Item $mt={131}>
            <Heading><Num>1.</Num>Entscheide dich für eine Plattform</Heading>
            <SubLine>Social Media – Instagram, Pinterest, <Word>TikTok</Word></SubLine>
            <SubLine>Telegram Newsletter</SubLine>
            <SubLine>Blog</SubLine>
            <SubLine><Word>Foren</Word> (Quora, Twitter)</SubLine>
            <SubLine>E-Mail Marketing</SubLine>
          </Item>
          <Item $mt={35}>
            <Heading><Num>2.</Num>Wähle deine Nische</Heading>
            <SubLine>Tiere <Arrow>→</Arrow> Hunde <Arrow>→</Arrow> Dalmatiner</SubLine>
          </Item>
          <Item $mt={33}>
            <Heading><Num>3.</Num>Partnerprogramme finden, denen man beitreten kann</Heading>
            <SubLine $mt={2}>Amazon, Digistore24, <Word>Clickbank</Word><TabGap $w={44} />Fressnapf, <Word>Zooplus</Word><TabGap $w={32} /><Word>FinanceAds</Word></SubLine>
          </Item>
          <Item $mt={33}>
            <Heading><Num>4.</Num>Großartige Inhalte erstellen</Heading>
            <SubLine>Alle 2 Tage ein guter Instagram Post (Farbwahl, Inhalt, optimiert durch Hashtags und CTA)</SubLine>
          </Item>
          <Item $mt={35}>
            <Heading><Num>5.</Num><span>Führe Traffic zu deiner <Word>Affiliate</Word>-Website</span></Heading>
            <SubLine>CTA, Bannerlinks, …</SubLine>
          </Item>
          <Item $mt={28}>
            <Heading><Num>6.</Num>Klicks in Verkäufe umwandeln</Heading>
            <SubLine>Landing-Page? Vorteil für Kunden?<TextCaret /></SubLine>
          </Item>
          <MouseCursor><IBeam /></MouseCursor>
        </Page>
        <ScrollBar>
          <ScrollArrow><TriUp /></ScrollArrow>
          <ScrollThumb />
          <ScrollArrow><TriDown /></ScrollArrow>
        </ScrollBar>
      </Workspace>

      <StatusBar>
        <StatusText>Seite 1 von 1</StatusText>
        <StatusText $ml={21}>80 Wörter</StatusText>
        <StatusText $ml={22}><ProofIcon /></StatusText>
        <StatusText $ml={17}>Deutsch (Österreich)</StatusText>
        <StatusRight>
          <FocusIcon />
          <StatusText $ml={4}>Fokus</StatusText>
          <ViewButton $ml={12}><ReadIcon /></ViewButton>
          <ViewButton $on><PrintIcon /></ViewButton>
          <ViewButton><WebIcon /></ViewButton>
          <ZoomMinus><Minus size={10} color="#555" /></ZoomMinus>
          <ZoomSlider><ZoomThumb /></ZoomSlider>
          <Plus size={11} color="#555" />
          <StatusText $ml={12}>170%</StatusText>
        </StatusRight>
      </StatusBar>

      <Taskbar>
        <StartButton><WinLogo /></StartButton>
        <TaskSearch>
          <Search size={18} color="#222" strokeWidth={1.4} style={{ transform: "scaleX(-1)" }} />
          <span>Zur Suche Text hier eingeben</span>
        </TaskSearch>
        <TaskSlot $w={49.5}><TaskViewIcon /></TaskSlot>
        <TaskSlot $running><FolderIcon /></TaskSlot>
        <TaskSlot><MailIcon /><Badge>4</Badge></TaskSlot>
        <TaskSlot $active $running><OfficeIcon dark="#1a4aa8" mid="#2b7cd3" light="#41a5ee" tile="#185abd" letter="W" /></TaskSlot>
        <TaskSlot><OfficeIcon dark="#107c41" mid="#21a366" light="#33c481" tile="#107c41" letter="X" /></TaskSlot>
        <TaskSlot><PowerPointIcon /></TaskSlot>
        <TaskSlot><AudacityIcon /></TaskSlot>
        <TaskSlot $running><ObsIcon /></TaskSlot>
        <TaskSlot $running><ChromeIcon /><ChromeBadge>T</ChromeBadge></TaskSlot>
        <TaskSlot><EdgeIcon /></TaskSlot>
        <TaskSlot><SnipIcon /></TaskSlot>
        <TaskSlot><NotepadIcon /></TaskSlot>
        <TaskSlot><SpotifyIcon /></TaskSlot>
        <Tray>
          <Sun />
          <Weather>17°C Sonnig</Weather>
          <TrayIcon $w={12} $ml={16}><ChevUpTray /></TrayIcon>
          <TrayIcon $w={12} $ml={11}><MeetIcon /></TrayIcon>
          <TrayIcon $w={16} $ml={11}><SpeakerIcon /></TrayIcon>
          <TrayIcon $w={14} $ml={11}><WifiIcon /></TrayIcon>
          <TrayIcon $w={23} $ml={7}><KeyboardIcon /></TrayIcon>
          <TrayIcon $w={24} $ml={11}>DEU</TrayIcon>
          <Clock>07:44<br />04.07.2021</Clock>
          <TrayIcon $w={16} $ml={14}><NotifyIcon /></TrayIcon>
          <TrayIcon $w={25} />
        </Tray>
      </Taskbar>
    </Screen>
  );
};

export default App;
